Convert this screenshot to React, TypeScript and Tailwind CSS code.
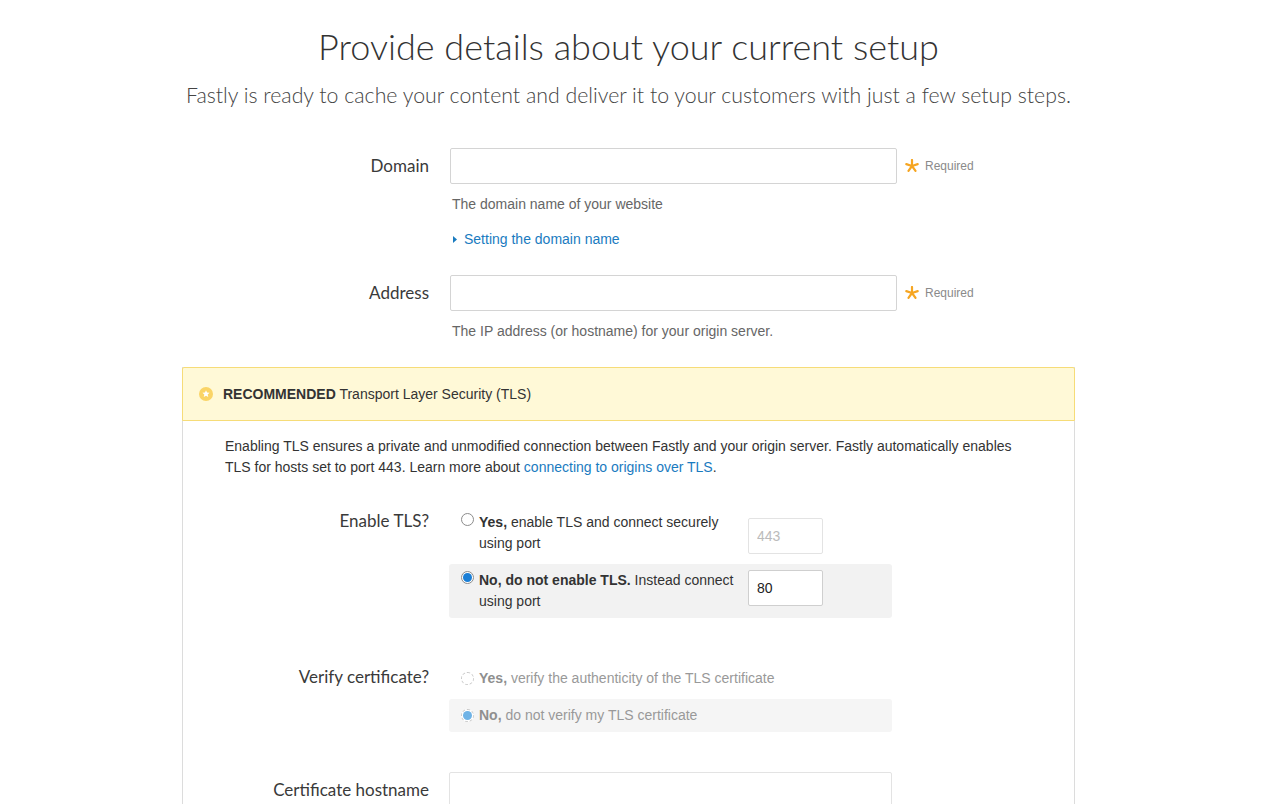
import React from "react";

const sans = { fontFamily: '"Liberation Sans", Arial, Helvetica, sans-serif' };
const head = { fontFamily: 'Lato, "Open Sans", sans-serif' };

function Asterisk() {
  const arms = [0, 72, 144, 216, 288];
  return (
    <svg width="14" height="14" viewBox="-7 -7 14 14">
      {arms.map((a) => (
        <line
          key={a}
          x1="0"
          y1="0"
          x2="0"
          y2="-6"
          stroke="#f6a623"
          strokeWidth="2.2"
          strokeLinecap="round"
          transform={`rotate(${a})`}
        />
      ))}
    </svg>
  );
}

function Required() {
  return (
    <div className="flex items-center gap-[6px] ml-[8px]" style={sans}>
      <Asterisk />
      <span className="text-[12px] text-[#8a8a8a]">Required</span>
    </div>
  );
}

function Radio({ checked, disabled }: { checked?: boolean; disabled?: boolean }) {
  return (
    <span
      className={
        "flex items-center justify-center w-[13px] h-[13px] rounded-full bg-white shrink-0 " +
        (disabled ? "border border-dashed border-[#c8c8c8]" : "border border-[#8c8c8c]")
      }
    >
      {checked && (
        <span
          className={
            "w-[9px] h-[9px] rounded-full " + (disabled ? "bg-[#6fb3e6]" : "bg-[#1b7fd6]")
          }
        />
      )}
    </span>
  );
}

function StarBadge() {
  return (
    <svg width="14" height="14" viewBox="0 0 14 14">
      <circle cx="7" cy="7" r="7" fill="#fad466" />
      <path
        d="M7 3.2 L8.05 5.6 L10.6 5.8 L8.65 7.5 L9.25 10 L7 8.65 L4.75 10 L5.35 7.5 L3.4 5.8 L5.95 5.6 Z"
        fill="#ffffff"
      />
    </svg>
  );
}

export default function App() {
  return (
    <div className="min-h-screen bg-white text-[#333]">
      <div className="ml-[182px] w-[893px]">
        <h1
          className="pt-[25px] text-center text-[36px] leading-[43px] font-light text-[#333]"
          style={head}
        >
          Provide details about your current setup
        </h1>
        <p
          className="mt-[13px] text-center text-[21.3px] leading-[28px] font-light text-[#444]"
          style={head}
        >
          Fastly is ready to cache your content and deliver it to your customers with just a few setup steps.
        </p>

        {/* Domain */}
        <div className="mt-[39px] flex items-center">
          <label className="w-[247px] text-right text-[17px] text-[#3a3a3a]" style={head}>
            Domain
          </label>
          <input
            className="ml-[21px] w-[447px] h-[36px] border border-[#d4d4d4] rounded-[2px] bg-white outline-none"
            type="text"
          />
          <Required />
        </div>
        <div className="ml-[270px]" style={sans}>
          <p className="mt-[10px] text-[14px] leading-[20px] text-[#666]">The domain name of your website</p>
          <a className="mt-[15px] flex items-center text-[14px] leading-[20px] text-[#1a7bbf]" href="#">
            <svg width="4" height="7" viewBox="0 0 4 7" className="ml-[1px] mr-[7px]">
              <path d="M0 0 L4 3.5 L0 7 Z" fill="#1a7bbf" />
            </svg>
            Setting the domain name
          </a>
        </div>

        {/* Address */}
        <div className="mt-[26px] flex items-center">
          <label className="w-[247px] text-right text-[17px] text-[#3a3a3a]" style={head}>
            Address
          </label>
          <input
            className="ml-[21px] w-[447px] h-[36px] border border-[#d4d4d4] rounded-[2px] bg-white outline-none"
            type="text"
          />
          <Required />
        </div>
        <div className="ml-[270px]" style={sans}>
          <p className="mt-[10px] text-[14px] leading-[20px] text-[#666]">
            The IP address (or hostname) for your origin server.
          </p>
        </div>

        {/* TLS panel */}
        <div className="mt-[26px] border-x border-[#dcdcdc]" style={sans}>
          <div className="-mx-px h-[54px] flex items-center border border-[#f6dc78] bg-[#fff9d7] rounded-t-[2px] pl-[16px]">
            <StarBadge />
            <span className="ml-[10px] text-[14px] text-[#333]">
              <b className="font-bold">RECOMMENDED</b> Transport Layer Security (TLS)
            </span>
          </div>
          <div className="px-[42px] pt-[15px]">
            <p className="text-[14px] leading-[21px] text-[#333]">
              Enabling TLS ensures a private and unmodified connection between Fastly and your origin server. Fastly
              automatically enables TLS for hosts set to port 443. Learn more about{" "}
              <a className="text-[#1a7bbf]" href="#">
                connecting to origins over TLS
              </a>
              .
            </p>
          </div>

          {/* Enable TLS */}
          <div className="mt-[28px] flex">
            <div className="w-[246px] text-right text-[17px] leading-[21px] pt-[4px] text-[#3a3a3a]" style={head}>
              Enable TLS?
            </div>
            <div className="ml-[20px] w-[443px] flex flex-col gap-[4px]">
              <div className="flex pl-[12px] pt-[6px] pb-[6px] rounded-[3px]">
                <div className="w-[287px] flex">
                  <span className="mt-[1px] flex">
                    <Radio />
                  </span>
                  <span className="ml-[5px] w-[268px] text-[14px] leading-[21px] text-[#333]">
                    <b className="font-bold">Yes,</b> enable TLS and connect securely using port
                  </span>
                </div>
                <input
                  className="mt-[6px] w-[75px] h-[36px] border border-[#e3e3e3] rounded-[2px] bg-white px-[8px] text-[14px] placeholder:text-[#bbb] outline-none"
                  placeholder="443"
                  disabled
                />
              </div>
              <div className="flex pl-[12px] pt-[6px] pb-[6px] rounded-[3px] bg-[#f2f2f2]">
                <div className="w-[287px] flex">
                  <span className="mt-[1px] flex">
                    <Radio checked />
                  </span>
                  <span className="ml-[5px] w-[268px] text-[14px] leading-[21px] text-[#333]">
                    <b className="font-bold">No, do not enable TLS.</b> Instead connect using port
                  </span>
                </div>
                <input
                  className="w-[75px] h-[36px] border border-[#cfcfcf] rounded-[2px] bg-white px-[8px] text-[14px] text-[#222] outline-none"
                  defaultValue="80"
                />
              </div>
            </div>
          </div>

          {/* Verify certificate */}
          <div className="mt-[44px] flex">
            <div className="w-[246px] text-right text-[17px] leading-[21px] pt-[4px] text-[#3a3a3a]" style={head}>
              Verify certificate?
            </div>
            <div className="ml-[20px] w-[443px] flex flex-col gap-[4px]">
              <div className="flex items-center pl-[12px] h-[33px] rounded-[3px]">
                <Radio disabled />
                <span className="ml-[5px] text-[14px] leading-[21px] text-[#999]">
                  <b className="font-bold text-[#8f8f8f]">Yes,</b> verify the authenticity of the TLS certificate
                </span>
              </div>
              <div className="flex items-center pl-[12px] h-[33px] rounded-[3px] bg-[#f5f5f5]">
                <Radio disabled checked />
                <span className="ml-[5px] text-[14px] leading-[21px] text-[#999]">
                  <b className="font-bold text-[#8f8f8f]">No,</b> do not verify my TLS certificate
                </span>
              </div>
            </div>
          </div>

          {/* Certificate hostname */}
          <div className="mt-[40px] flex items-center pb-[20px]">
            <div className="w-[246px] text-right text-[17px] text-[#3a3a3a]" style={head}>
              Certificate hostname
            </div>
            <input
              className="ml-[20px] w-[443px] h-[36px] border border-[#e3e3e3] rounded-[2px] bg-white outline-none"
              type="text"
            />
          </div>
        </div>
      </div>
    </div>
  );
}
